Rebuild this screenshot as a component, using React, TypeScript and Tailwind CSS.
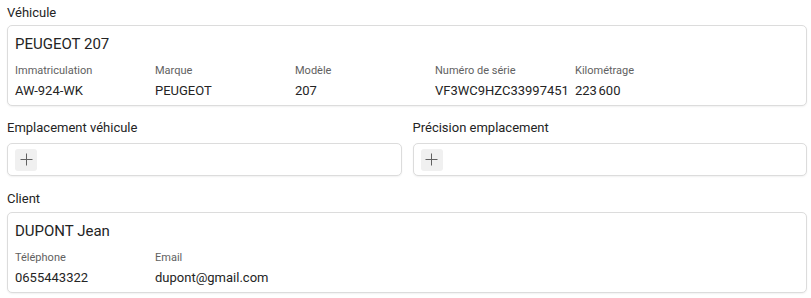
import React from 'react';

const font = { fontFamily: '"Segoe UI", Roboto, "Noto Sans", sans-serif' };

type Field = { label: string; value: string };

function InfoCard({ title, fields }: { title: string; fields: Field[] }) {
  return (
    <div className="h-[81px] rounded-[5px] border border-[#dcdcdc] bg-white px-[7px] pt-[8px] shadow-[0_1px_2px_rgba(0,0,0,0.06)]">
      <div className="h-[20px] text-[15px] leading-[20px] text-[#242424]">{title}</div>
      <div className="mt-[9px] flex">
        {fields.map((f) => (
          <div key={f.label} className="w-[140px] shrink-0">
            <div className="h-[16px] text-[11px] leading-[16px] text-[#616161]">{f.label}</div>
            <div className="mt-[3px] h-[18px] text-[13px] leading-[18px] text-[#242424]">{f.value}</div>
          </div>
        ))}
      </div>
    </div>
  );
}

function PlusBox() {
  return (
    <div className="flex h-[33px] items-center rounded-[5px] border border-[#dcdcdc] bg-white px-[7px] shadow-[0_1px_2px_rgba(0,0,0,0.06)]">
      <button className="flex h-[22px] w-[22px] items-center justify-center rounded-[3px] bg-[#f0f0f0]">
        <svg width="13" height="13" viewBox="0 0 13 13" fill="none">
          <path d="M6.5 0.5v12M0.5 6.5h12" stroke="#616161" strokeWidth="1" />
        </svg>
      </button>
    </div>
  );
}

function Label({ children }: { children: React.ReactNode }) {
  return <div className="h-[18px] text-[13px] leading-[18px] text-[#242424]">{children}</div>;
}

export default function App() {
  return (
    <div className="min-h-screen bg-white px-[7px] pt-[4px] pr-[4px]" style={font}>
      <Label>Véhicule</Label>
      <div className="mt-[3px]">
        <InfoCard
          title="PEUGEOT 207"
          fields={[
            { label: 'Immatriculation', value: 'AW-924-WK' },
            { label: 'Marque', value: 'PEUGEOT' },
            { label: 'Modèle', value: '207' },
            { label: 'Numéro de série', value: 'VF3WC9HZC33997451' },
            { label: 'Kilométrage', value: '223\u202F600' },
          ]}
        />
      </div>

      <div className="mt-[13px] grid grid-cols-2 gap-x-[11px]">
        <div>
          <Label>Emplacement véhicule</Label>
          <div className="mt-[6px]">
            <PlusBox />
          </div>
        </div>
        <div>
          <Label>Précision emplacement</Label>
          <div className="mt-[6px]">
            <PlusBox />
          </div>
        </div>
      </div>

      <div className="mt-[14px]">
        <Label>Client</Label>
        <div className="mt-[4px]">
          <InfoCard
            title="DUPONT Jean"
            fields={[
              { label: 'Téléphone', value: '0655443322' },
              { label: 'Email', value: 'dupont@gmail.com' },
            ]}
          />
        </div>
      </div>
    </div>
  );
}
